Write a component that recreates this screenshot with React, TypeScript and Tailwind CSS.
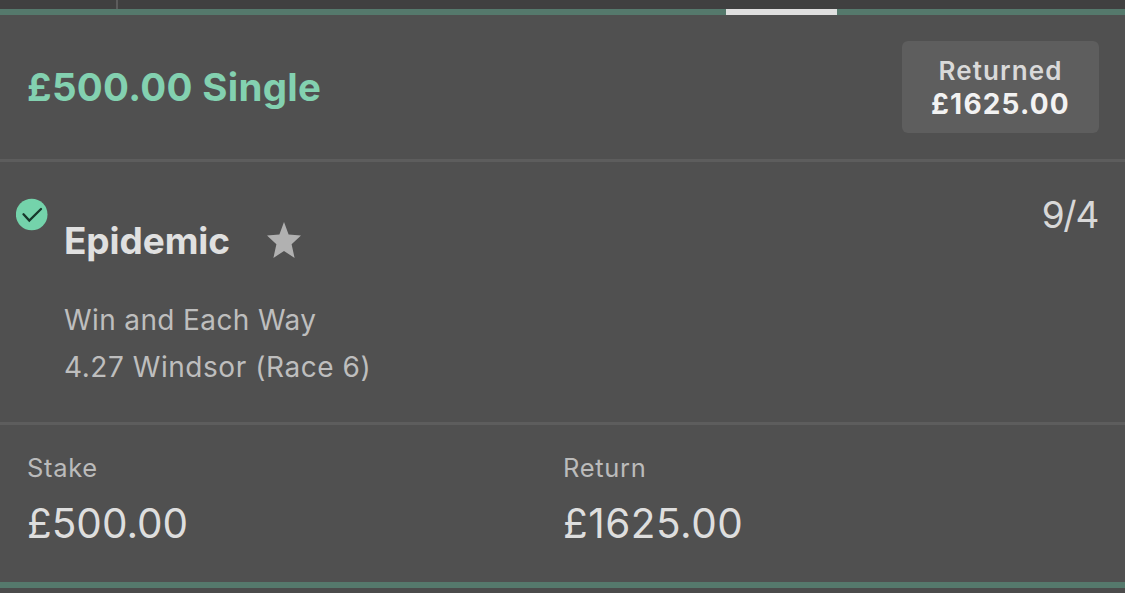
import React from 'react';

interface Bet {
  stake: string;
  type: string;
  returned: string;
  selection: string;
  odds: string;
  market: string;
  event: string;
}

const bet: Bet = {
  stake: '£500.00',
  type: 'Single',
  returned: '£1625.00',
  selection: 'Epidemic',
  odds: '9/4',
  market: 'Win and Each Way',
  event: '4.27 Windsor (Race 6)',
};

const WonIcon: React.FC = () => (
  <svg width="32" height="33" viewBox="0 0 32 33" fill="none" className="shrink-0">
    <circle cx="15.7" cy="16.5" r="15.8" fill="#74d3ab" />
    <path d="M7.5 16.3L13.3 22.6L25 11" stroke="#17382c" strokeWidth="2.3" strokeLinecap="round" />
  </svg>
);

const StarIcon: React.FC = () => (
  <svg width="34" height="36" viewBox="0 0 34 36" className="mb-0.5 shrink-0">
    <path
      d="M17 0L21.6 12.4L34 13.4L24.6 22.2L27.6 36L17 28.9L6.4 36L9.4 22.2L0 13.4L12.4 12.4Z"
      fill="#b1b1b1"
    />
  </svg>
);

const Amount: React.FC<{ label: string; children: React.ReactNode }> = ({ label, children }) => (
  <div className="w-[536px]">
    <div className="text-[25.5px] leading-[36px] tracking-[0.7px] text-[#bbbbbb]">{label}</div>
    <div className="mt-[13px] text-[40.5px] leading-[50px]">{children}</div>
  </div>
);

const App: React.FC = () => {
  return (
    <div className="h-[593px] w-full overflow-hidden bg-[#505050] font-['Inter',sans-serif]">
      <div className="flex h-[9px] bg-[#404040]">
        <div className="w-[118px] border-r-2 border-[#5c5c5c]" />
      </div>
      <div className="h-1.5 bg-[#55796c] pl-[726px]">
        <div className="h-full w-[111px] bg-[#dfdfdf]" />
      </div>

      <header className="flex h-[147px] justify-between border-b-3 border-[#5d5d5d] pl-[27px] pr-[26px] pt-[26px]">
        <h1 className="h-[92px] text-[38.5px] font-bold leading-[92px] tracking-[0.3px] text-[#83d1b0]">
          {bet.stake} {bet.type}
        </h1>
        <div className="flex h-[92px] w-[197px] flex-col items-center rounded-md bg-[#5e5e5e] pt-3">
          <span className="text-[26px] font-semibold leading-[35px] tracking-[1.1px] text-[#d9d9d9]">Returned</span>
          <span className="text-[28px] font-bold leading-[33px] tracking-[1.2px] text-[#f2f2f2]">{bet.returned}</span>
        </div>
      </header>

      <section className="flex h-[263px] border-b-3 border-[#5d5d5d] pl-4 pr-[27px] pt-9">
        <WonIcon />
        <div className="ml-4 mt-[18px] flex-1">
          <div className="flex h-[50px] items-center gap-[38px]">
            <h2 className="w-[165px] text-[37px] font-bold leading-[50px] tracking-[-0.1px] text-[#e0e0e0]">
              {bet.selection}
            </h2>
            <StarIcon />
          </div>
          <div className="mt-[31px] text-[28px] leading-[47px] text-[#bebebe]">
            <p className="tracking-[0.38px]">{bet.market}</p>
            <p className="tracking-[0.55px]">{bet.event}</p>
          </div>
        </div>
        <div className="-mt-1 text-[37px] leading-[42px] tracking-[-1.3px] text-[#d8d8d8]">{bet.odds}</div>
      </section>

      <footer className="flex h-[157px] pl-[27px] pt-[25px]">
        <Amount label="Stake">
          <span className="text-[#dedede]">{bet.stake}</span>
        </Amount>
        <Amount label="Return">
          <span className="tracking-[0.5px] text-[#dedede]">{bet.returned}</span>
        </Amount>
      </footer>
      <div className="h-1.5 bg-[#55796c]" />
      <div className="h-[5px] bg-[#4b4b4b]" />
    </div>
  );
};

export default App;
